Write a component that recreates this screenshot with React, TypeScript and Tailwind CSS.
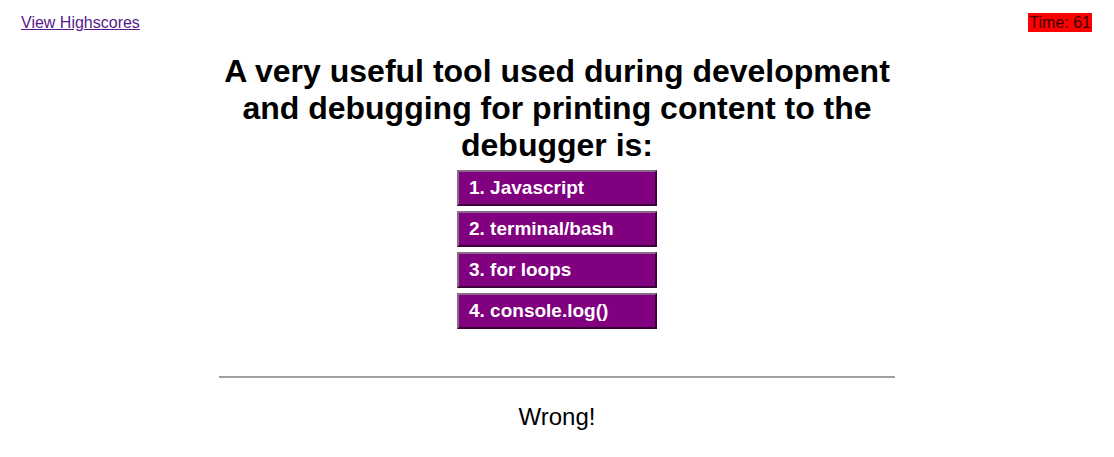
import React from 'react';

const choices = ['1. Javascript', '2. terminal/bash', '3. for loops', '4. console.log()'];

export default function App() {
  return (
    <div className="min-h-[457px] bg-white text-black font-['Liberation_Sans',Arial,sans-serif]">
      <header className="flex items-start justify-between px-[21px] pt-[13px]">
        <a href="#" className="text-[16px] leading-[19px] text-[#551a8b] underline">
          View Highscores
        </a>
        <div className="whitespace-pre bg-[#ff0000] px-[1px] text-[16px] leading-[19px] text-[#3a0000] mr-[1px]">
          Time: 61
        </div>
      </header>

      <main className="mx-auto w-[676px] text-center">
        <h1 className="mt-[21px] text-[32px] font-bold leading-[37px]">
          A very useful tool used during development and debugging for printing content to the debugger is:
        </h1>
        <div className="mt-[6px] flex flex-col items-center gap-[5px]">
          {choices.map((c) => (
            <button
              key={c}
              className="h-[36px] w-[200px] border-2 border-t-[#8a6a8a] border-l-[#8a6a8a] border-b-[#3a003a] border-r-[#3a003a] bg-[#800080] pl-[10px] text-left text-[19px] font-bold text-white"
            >
              {c}
            </button>
          ))}
        </div>
        <hr className="mt-[47px] border-t-2 border-t-[#a0a0a0] border-b-0" />
        <p className="mt-[25px] text-[24px] leading-[28px]">Wrong!</p>
      </main>
    </div>
  );
}
